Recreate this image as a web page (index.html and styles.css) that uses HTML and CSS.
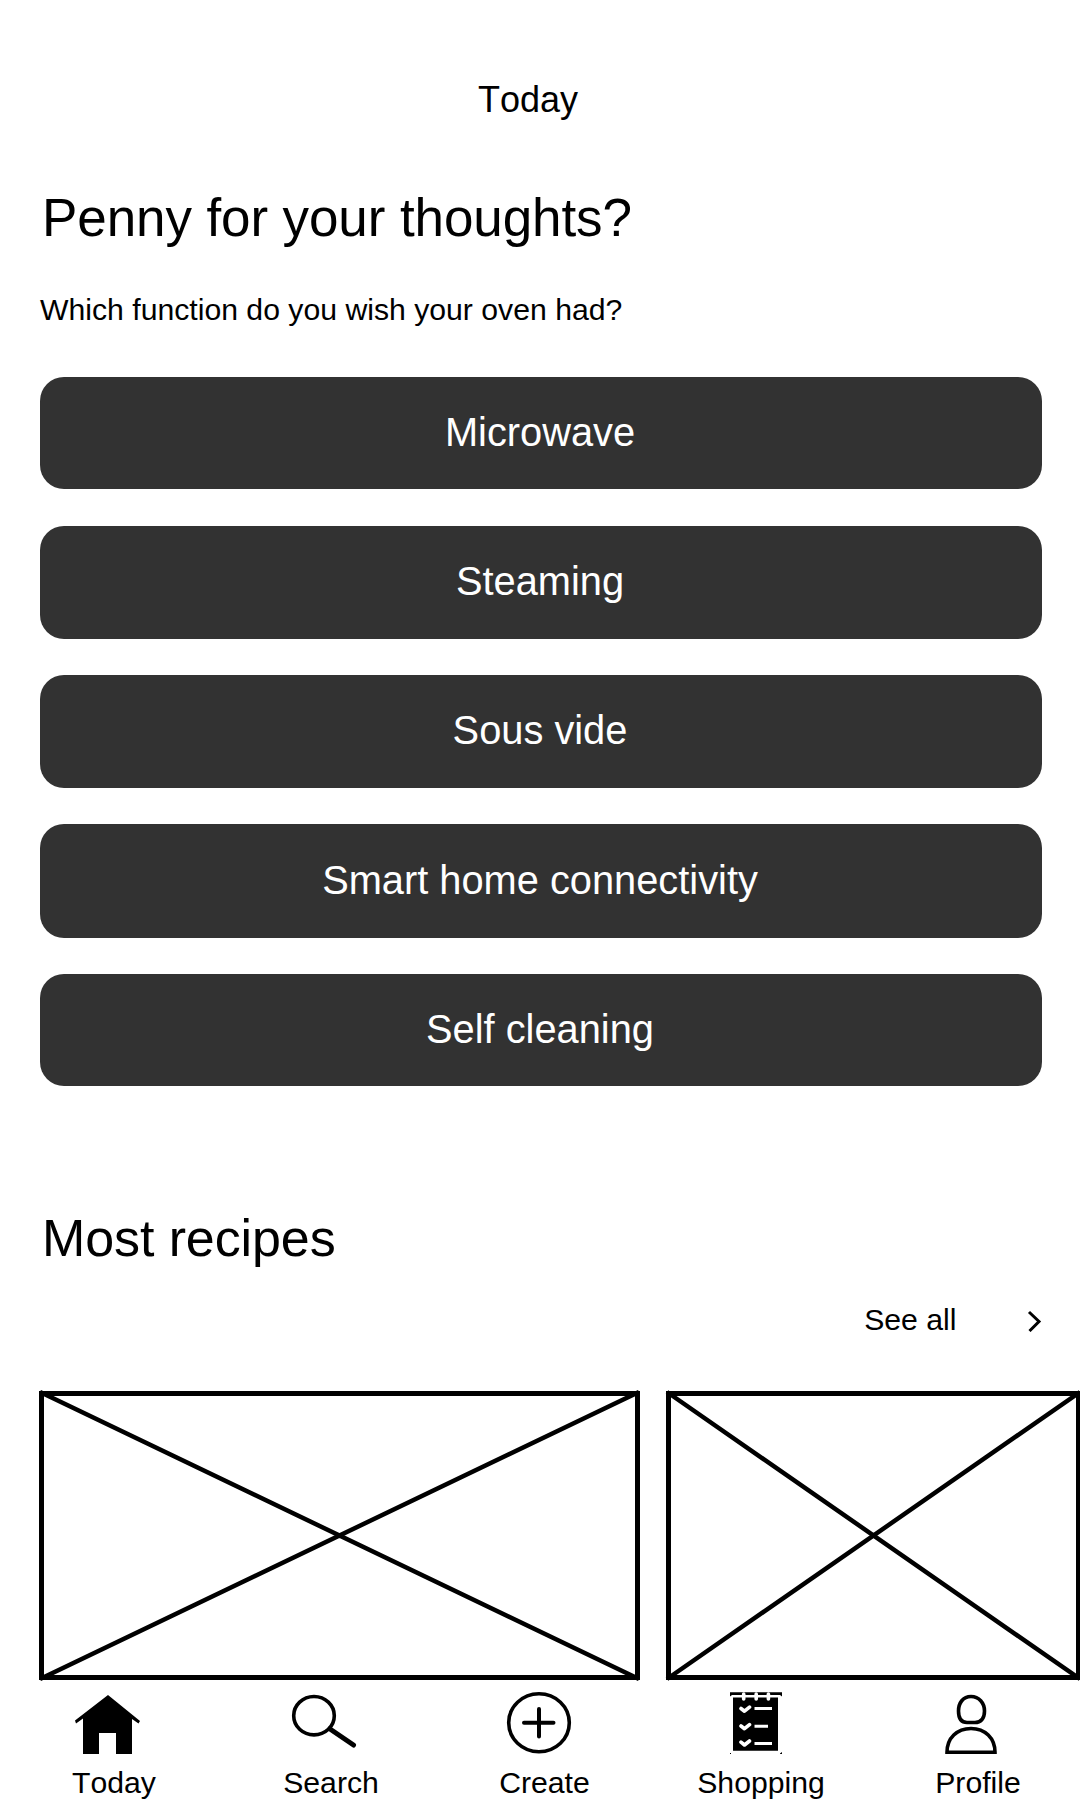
FILE: index.html
```html
<!DOCTYPE html>
<html lang="en">
<head>
<meta charset="utf-8">
<title>Today</title>
<link rel="stylesheet" href="styles.css">
</head>
<body>
<header class="topbar">Today</header>
<main class="content">
  <h1 class="title">Penny for your thoughts?</h1>
  <p class="question">Which function do you wish your oven had?</p>
  <div class="options">
    <button class="option option-first">Microwave</button>
    <button class="option">Steaming</button>
    <button class="option">Sous vide</button>
    <button class="option">Smart home connectivity</button>
    <button class="option">Self cleaning</button>
  </div>
  <h2 class="subtitle">Most recipes</h2>
  <a class="see-all">See all
    <svg class="chevron" width="16" height="24" viewBox="0 0 16 24"><path d="M2 4 12 13.500 2.500 23"/></svg>
  </a>
  <div class="recipes">
    <svg class="placeholder" width="603" height="291" viewBox="0 0 603 291"><rect x="3.5" y="3.5" width="596" height="284"/><path d="M2 2 601 289M601 2 2 289"/></svg>
    <svg class="placeholder" width="417" height="291" viewBox="0 0 417 291"><rect x="3.5" y="3.5" width="410" height="284"/><path d="M2 2 415 289M415 2 2 289"/></svg>
  </div>
</main>
<nav class="tabs">
  <a class="tab">
    <svg width="72" height="66" viewBox="72 1690 72 66"><path d="M108 1695 140 1721 138.500 1723.500 132 1719V1754H116V1733H99V1754H83V1718.500L76 1723.500 75 1720.500Z"/></svg>
    <span class="label">Today</span>
  </a>
  <a class="tab">
    <svg width="72" height="66" viewBox="288 1690 72 66"><ellipse class="line" cx="314" cy="1715.700" rx="20.300" ry="19.200"/><path class="line handle" d="M330 1729 353.500 1745"/></svg>
    <span class="label label-search">Search</span>
  </a>
  <a class="tab">
    <svg width="72" height="66" viewBox="504 1690 72 66"><ellipse class="line" cx="539" cy="1722.700" rx="30.300" ry="29"/><path class="line plus" d="M524 1722.700H553.500M539 1709V1736.500"/></svg>
    <span class="label label-create">Create</span>
  </a>
  <a class="tab">
    <svg width="72" height="66" viewBox="720 1690 72 66">
      <path d="M730 1692.300H782V1696.500L780 1695H732L730 1696.500ZM733 1697.500H778V1750.700H733ZM730 1753H731V1754H730ZM780 1753.500 782 1752V1754H780Z"/>
      <path class="cutout" d="M743.700 1694V1699M756.200 1694V1699M768.400 1694V1699M741 1708.500 744.500 1711.200 749.500 1707.200M741 1726 744.500 1728.700 749.500 1724.700M741 1742.200 744.500 1745 749.500 1741"/>
      <path class="cutout cutout-row" d="M754.500 1708.500H772M754.500 1726.300H768M754.500 1743.500H772"/>
    </svg>
    <span class="label label-shopping">Shopping</span>
  </a>
  <a class="tab">
    <svg width="72" height="66" viewBox="936 1690 72 66"><path class="line" d="M971 1696.500C979 1696.500 984.500 1703 984.500 1711C984.500 1719 980.500 1722.500 975 1722.500H967C961.500 1722.500 958.500 1719 958.500 1711C958.500 1703 963 1696.500 971 1696.500ZM947 1752.300C947 1738 957 1728.500 971 1728.500S995 1738 995 1752.300Z"/></svg>
    <span class="label">Profile</span>
  </a>
</nav>
</body>
</html>
```
FILE: styles.css
```css
* { box-sizing: border-box; }
body {
  margin: 0;
  width: 1080px;
  height: 1800px;
  overflow: hidden;
  background: #fff;
  color: #000;
  font-family: "Liberation Sans", Arial, sans-serif;
  font-kerning: none;
}
.topbar {
  height: 180px;
  padding: 80px 24px 0 0;
  font-size: 36px;
  line-height: 40px;
  text-align: center;
}
.title, .subtitle { margin: 0; font-weight: 400; }
.title { height: 109px; padding-left: 42px; font-size: 53px; line-height: 75px; letter-spacing: -0.1px; }
.question { margin: 0; height: 88px; padding-left: 40px; font-size: 30.200px; line-height: 42px; }
.options { display: grid; grid-template-rows: 113px 113px 113px 114px 112px; row-gap: 36px; padding: 0 38px 0 40px; }
.option {
  padding: 0 2px 2px 0;
  border: 0;
  border-radius: 24px;
  background: #323232;
  color: #fff;
  font: 400 39.800px "Liberation Sans", Arial, sans-serif;
}
.option-first { height: 112px; }
.subtitle { margin-top: 116px; padding-left: 42px; font-size: 52px; line-height: 72px; letter-spacing: -0.1px; }
.see-all {
  display: flex;
  justify-content: flex-end;
  align-items: center;
  gap: 70px;
  height: 40px;
  margin-top: 26px;
  padding-right: 37.500px;
  font-size: 30.200px;
}
.chevron { fill: none; stroke: #000; stroke-width: 3; }
.recipes { display: flex; gap: 24px; margin-top: 50px; padding-left: 38px; }
.placeholder { flex: none; display: block; fill: none; stroke: #000; }
.placeholder rect { stroke-width: 5; }
.placeholder path { stroke-width: 4.500; }
.tabs { display: grid; grid-template-columns: repeat(5, 216px); margin-top: 9px; }
.tab { display: flex; flex-direction: column; align-items: center; }
.line { fill: none; stroke: #000; stroke-width: 3.600; }
.handle { stroke-width: 5; stroke-linecap: round; }
.plus { stroke-width: 4; stroke-linecap: round; }
.cutout { fill: none; stroke: #fff; stroke-width: 3.600; stroke-linecap: round; stroke-linejoin: round; }
.cutout-row { stroke-width: 3; stroke-linecap: butt; }
.label { padding-left: 12px; margin-top: 9px; font-size: 30.200px; line-height: 36px; }
.label-search { padding-left: 14px; }
.label-create { padding-left: 9px; }
.label-shopping { padding-left: 10px; }
```
